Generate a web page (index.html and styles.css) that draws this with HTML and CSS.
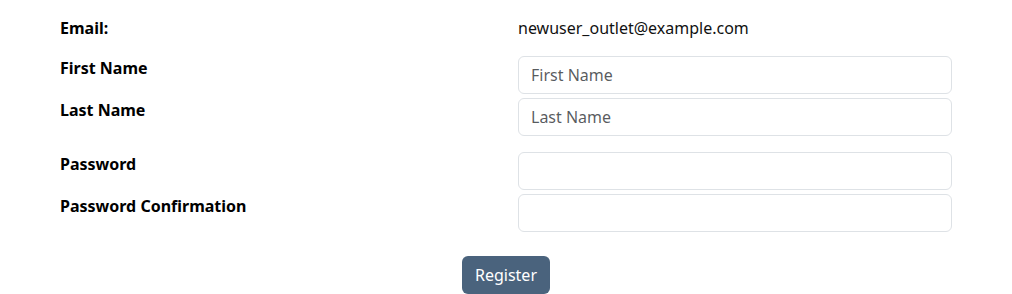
FILE: index.html
```html
<!DOCTYPE html>
<html>
<head>
<meta charset="utf-8">
<link rel="stylesheet" href="styles.css">
</head>
<body>
<form class="form">
  <div class="row row-email">
    <div class="label">Email:</div>
    <div class="value">newuser_outlet@example.com</div>
  </div>
  <div class="group">
    <div class="row">
      <label class="label">First Name</label>
      <input class="input" type="text" placeholder="First Name">
    </div>
    <div class="row">
      <label class="label">Last Name</label>
      <input class="input" type="text" placeholder="Last Name">
    </div>
  </div>
  <div class="group">
    <div class="row">
      <label class="label">Password</label>
      <input class="input" type="password">
    </div>
    <div class="row">
      <label class="label">Password Confirmation</label>
      <input class="input" type="password">
    </div>
  </div>
  <div class="actions">
    <button class="btn" type="button">Register</button>
  </div>
</form>
</body>
</html>
```
FILE: styles.css
```css
html, body {
  margin: 0;
  padding: 0;
  background: #fff;
}
body {
  font-family: "Noto Sans", "Open Sans", sans-serif;
  font-size: 16px;
  color: #000;
}
.form {
  padding: 16px 48px 0;
}
.row {
  display: grid;
  grid-template-columns: 1fr 1fr;
  column-gap: 24px;
  margin: 0 12px;
}
.row-email {
  line-height: 24px;
  margin-bottom: 16px;
}
.label {
  font-weight: 700;
  font-size: 16px;
  line-height: 24px;
}
.value {
  font-size: 16px;
  color: #111;
}
.group {
  display: flex;
  flex-direction: column;
  gap: 4px;
  margin-bottom: 16px;
}
.group + .group {
  margin-bottom: 24px;
}
.input {
  box-sizing: border-box;
  height: 38px;
  width: 100%;
  border: 1px solid #dee2e6;
  border-radius: 6px;
  padding: 0 12px;
  font-family: "Noto Sans", "Open Sans", sans-serif;
  font-size: 16px;
  color: #212529;
  margin: 0;
}
.input::placeholder {
  color: rgba(33, 37, 41, 0.75);
}
.actions {
  display: flex;
  justify-content: center;
}
.btn {
  height: 38px;
  padding: 0 13px;
  border: none;
  border-radius: 6px;
  background: #4a637d;
  color: #fff;
  font-family: "Noto Sans", "Open Sans", sans-serif;
  font-size: 16px;
}
```
